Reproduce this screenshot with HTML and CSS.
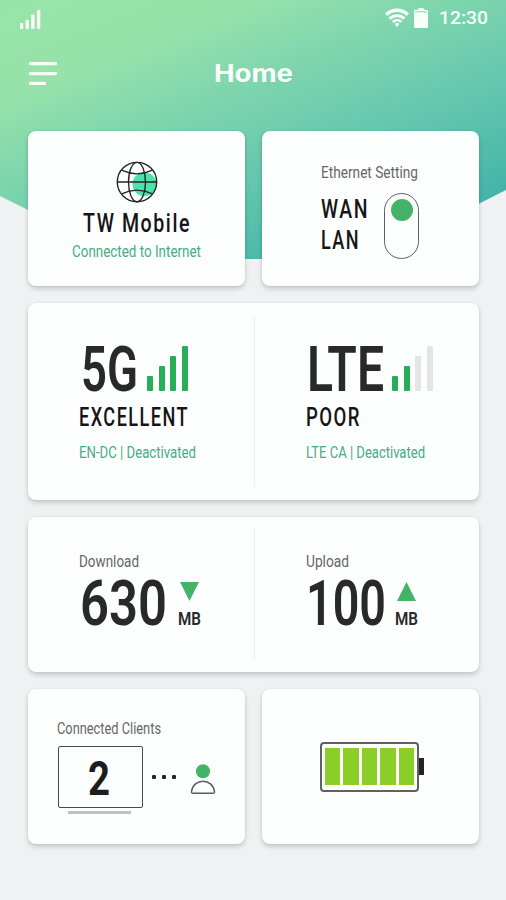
FILE: index.html
```html
<!DOCTYPE html>
<html lang="en">
<head>
<meta charset="utf-8">
<meta name="viewport" content="width=device-width, initial-scale=1">
<title>Home</title>
<link rel="stylesheet" href="styles.css">
</head>
<body>
<div class="screen">
  <header class="header">
    <div class="status">
      <svg class="signal" width="21" height="19" viewBox="0 0 21 19" fill="currentColor"><rect x="0" y="13" width="3.3" height="6" rx="1"/><rect x="5.6" y="9.8" width="3.3" height="9.2" rx="1"/><rect x="11.2" y="4.6" width="3.3" height="14.4" rx="1"/><rect x="17" y="0" width="3.3" height="19" rx="1"/></svg>
      <svg class="wifi" width="24" height="20" viewBox="0 0 24 20" fill="none" stroke="currentColor"><path d="M1.2 6.8C7.2 .8 16.8 .8 22.8 6.8" stroke-width="3.5"/><path d="M4.6 10.6C8.8 6.6 15.2 6.6 19.4 10.6" stroke-width="2.9"/><path d="M7.7 14C10.2 11.6 13.8 11.6 16.3 14" stroke-width="2.5"/><path d="M9.6 15.8Q12 14 14.4 15.8L12 19.2Z" fill="currentColor" stroke="none"/></svg>
      <svg class="cell" width="14" height="20" viewBox="0 0 14 20" fill="currentColor"><path d="M4 1.8Q4 0 5.5 0h3Q10 0 10 1.8h2.2Q14 1.8 14 3.4v15Q14 20 12.4 20H1.6Q0 20 0 18.4v-15Q0 1.8 1.8 1.8Z"/><path d="M1 4.2Q7 2.9 13 4.2" fill="none" stroke="#8bd8b1"/></svg>
      <svg class="text time" width="49" height="14"><text y="14" textLength="49" lengthAdjust="spacingAndGlyphs">12:30</text></svg>
    </div>
    <div class="bar">
      <svg class="menu" width="28" height="24" viewBox="0 0 28 24" fill="currentColor"><rect width="28" height="3.2" rx="1.2"/><rect y="10" width="28" height="3.2" rx="1.2"/><rect y="19.8" width="17" height="3.2" rx="1.2"/></svg>
      <svg class="text heading" width="79" height="18"><text y="18" textLength="79" lengthAdjust="spacingAndGlyphs">Home</text></svg>
    </div>
  </header>
  <main class="cards">
    <section class="card provider">
      <svg class="globe" width="42" height="42" viewBox="0 0 42 42"><circle cx="28.5" cy="23.2" r="12" fill="#48e4ae"/><g fill="none" stroke="#242424" stroke-width="1.35"><circle cx="21" cy="21" r="19.7"/><ellipse cx="21" cy="21" rx="8.5" ry="19.7"/><path d="M1.3 21h39.4M5.6 9.2Q21 16.5 36.4 9.2M5.6 32.8Q21 25.5 36.4 32.8"/></g></svg>
      <svg class="text title" width="108" height="18"><text y="18" textLength="108" lengthAdjust="spacingAndGlyphs">TW Mobile</text></svg>
      <svg class="text note" width="129" height="12"><text y="12" textLength="129" lengthAdjust="spacingAndGlyphs">Connected to Internet</text></svg>
    </section>
    <section class="card ethernet">
      <svg class="text label" width="97" height="12"><text y="12" textLength="97" lengthAdjust="spacingAndGlyphs">Ethernet Setting</text></svg>
      <div class="ports">
        <div class="names">
          <svg class="text title" width="48" height="18"><text y="18" textLength="48" lengthAdjust="spacingAndGlyphs">WAN</text></svg>
          <svg class="text title" width="39" height="18"><text y="18" textLength="39" lengthAdjust="spacingAndGlyphs">LAN</text></svg>
        </div>
        <div class="toggle"><span class="knob"></span></div>
      </div>
    </section>
    <section class="card wide network">
      <div class="half">
        <div class="row">
          <svg class="text big" width="57" height="45"><text y="45" textLength="57" lengthAdjust="spacingAndGlyphs">5G</text></svg>
          <div class="bars"><i class="b1"></i><i class="b2"></i><i class="b3"></i><i class="b4"></i></div>
        </div>
        <svg class="text title" width="110" height="18"><text y="18" textLength="110" lengthAdjust="spacingAndGlyphs">EXCELLENT</text></svg>
        <svg class="text note" width="117" height="12"><text y="12" textLength="117" lengthAdjust="spacingAndGlyphs">EN-DC | Deactivated</text></svg>
      </div>
      <div class="half">
        <div class="row">
          <svg class="text big" width="77" height="45"><text y="45" textLength="77" lengthAdjust="spacingAndGlyphs">LTE</text></svg>
          <div class="bars"><i class="b1"></i><i class="b2"></i><i class="b3 off"></i><i class="b4 off"></i></div>
        </div>
        <svg class="text title" width="55" height="18"><text y="18" textLength="55" lengthAdjust="spacingAndGlyphs">POOR</text></svg>
        <svg class="text note" width="119" height="12"><text y="12" textLength="119" lengthAdjust="spacingAndGlyphs">LTE CA | Deactivated</text></svg>
      </div>
    </section>
    <section class="card wide traffic">
      <div class="half">
        <svg class="text label" width="60" height="12"><text y="12" textLength="60" lengthAdjust="spacingAndGlyphs">Download</text></svg>
        <div class="row">
          <svg class="text big" width="87" height="45"><text y="45" textLength="87" lengthAdjust="spacingAndGlyphs">630</text></svg>
          <div class="unit">
            <svg class="arrow" width="19" height="19"><path d="M0 0h19L9.5 19Z"/></svg>
            <svg class="text mb" width="23" height="13"><text y="13" textLength="23" lengthAdjust="spacingAndGlyphs">MB</text></svg>
          </div>
        </div>
      </div>
      <div class="half">
        <svg class="text label" width="43" height="12"><text y="12" textLength="43" lengthAdjust="spacingAndGlyphs">Upload</text></svg>
        <div class="row">
          <svg class="text big" width="80" height="45"><text y="45" textLength="80" lengthAdjust="spacingAndGlyphs">100</text></svg>
          <div class="unit">
            <svg class="arrow" width="19" height="19"><path d="M0 19h19L9.5 0Z"/></svg>
            <svg class="text mb" width="23" height="13"><text y="13" textLength="23" lengthAdjust="spacingAndGlyphs">MB</text></svg>
          </div>
        </div>
      </div>
    </section>
    <section class="card clients">
      <svg class="text label" width="104" height="12"><text y="12" textLength="104" lengthAdjust="spacingAndGlyphs">Connected Clients</text></svg>
      <div class="devices">
        <div class="monitor">
          <div class="panel"><svg class="text count" width="22" height="35"><text y="35" textLength="22" lengthAdjust="spacingAndGlyphs">2</text></svg></div>
          <div class="stand"></div>
        </div>
        <div class="dots"><i></i><i></i><i></i></div>
        <svg class="person" width="26" height="31" viewBox="0 0 26 31"><circle cx="13" cy="7.2" r="7" fill="#43b467"/><path d="M3 29.3h20q1.7 0 1.5-1.7C23.5 21 18.5 17.2 13 17.2S2.5 21 1.5 27.600Q1.3 29.3 3 29.3Z" fill="none" stroke="#5c5c5c" stroke-width="1.5"/></svg>
      </div>
    </section>
    <section class="card power">
      <div class="battery"><i></i><i></i><i></i><i></i><i></i></div>
      <div class="tip"></div>
    </section>
  </main>
</div>
</body>
</html>
```

FILE: styles.css
```css
* { box-sizing: border-box; }
body { margin: 0; background: #f0f1f3; font-family: Roboto, sans-serif; }
.screen { width: 506px; height: 900px; overflow: hidden; background: #f0f1f3; }
svg { display: block; flex: none; }

.header {
  height: 259px;
  color: #f9fff9;
  background: linear-gradient(158deg, #98e4a8 0%, #96e2aa 22%, #7ad3ae 43%, #64c6ae 62%, #4cb9aa 79%, #3dafaa 92%);
  clip-path: polygon(0 0, 100% 0, 100% 190px, 370px 259px, 126px 259px, 0 196px);
}
.status { display: flex; height: 36px; padding: 8px 18px 0 20px; align-items: flex-start; }
.signal { margin: 2px auto 0 0; }
.wifi { margin-right: 5px; }
.cell { margin-right: 11px; }
.time { margin: 2px 0 0; }
.bar { display: flex; padding: 25.500px 0 0 28.500px; align-items: flex-start; }
.heading { margin: 2.500px 0 0 157px; }

/* Each text box is as tall as its capitals, with the baseline on its lower edge. */
.text { overflow: visible; fill: currentColor; }
.time { font-size: 19px; font-weight: 500; }
.heading { font: 700 24.500px Inter, sans-serif; }
.title { font-size: 25px; font-weight: 500; letter-spacing: 2px; color: #151515; }
.note { font-size: 16px; font-weight: 400; color: #45ad84; }
.label { font-size: 16px; font-weight: 400; color: #666; }
.big { font-size: 63px; font-weight: 600; color: #292929; }
.mb { font-size: 18.500px; font-weight: 600; color: #292929; }
.count { font-size: 49px; font-weight: 700; color: #1d1d1d; }

.cards {
  display: grid;
  grid-template: 155px 197px 154.500px 155px / 217px 217px;
  gap: 17px;
  margin: -128px 27px 0 28px;
}
.card {
  position: relative;
  border-radius: 8px;
  background: #fdfefe;
  box-shadow: 0 3px 5px rgba(0, 0, 0, .16), 0 0 3px rgba(0, 0, 0, .07);
}
.wide { grid-column: span 2; display: grid; grid-template-columns: 226px 1fr; }

.provider { display: flex; flex-direction: column; align-items: center; padding-top: 30px; }
.provider .title { margin-top: 11px; }
.provider .note { margin-top: 13px; }

.ethernet { padding: 35px 0 0 59px; }
.ports { display: flex; margin-top: 15px; gap: 15px; }
.names { display: grid; gap: 13px; align-content: start; padding-top: 7px; }
.toggle { width: 35px; height: 66px; border: 1.500px solid #606060; border-radius: 18px; padding-top: 5px; }
.knob { display: block; width: 22px; height: 22px; margin: 0 auto; border-radius: 50%; background: #43b467; }

.row { display: flex; align-items: flex-end; }
.half + .half { border-left: 1px solid #ededef; }
.network { padding: 14px 0; }
.network .half { padding: 29px 0 0 51px; }
.network .title { margin-top: 17px; }
.network .note { margin-top: 20px; }
.network .half:first-child .row { margin-left: 2px; gap: 9px; }
.network .half + .half .row { margin-left: 1px; gap: 8px; }
.bars { display: flex; align-items: flex-end; gap: 5.500px; }
.bars i { width: 6px; border-radius: 1px; background: #27ae57; }
.bars .off { background: #e5e5e5; }
.b1 { height: 15px; }
.b2 { height: 25px; }
.b3 { height: 35px; }
.b4 { height: 45px; }

.traffic { padding: 12px 0; }
.traffic .half { padding: 26px 0 0 51px; }
.traffic .row { margin-top: 13px; gap: 11px; }
.traffic .big { margin-left: 1px; }
.traffic .half + .half .row { gap: 9px; margin-left: -1px; }
.unit { display: grid; gap: 11px; justify-items: center; }
.arrow { fill: #43b467; }

.clients { padding: 33px 0 0 29px; }
.devices { display: flex; margin: 12px 0 0 1px; }
.monitor { width: 85px; }
.panel { display: flex; width: 85px; height: 62px; border: 1.500px solid #4b4b4b; border-radius: 2px; justify-content: center; padding: 13px 3px 0 0; }
.stand { width: 63px; height: 3px; margin: 3px 0 0 10px; background: #c0c0c0; }
.dots { display: flex; gap: 6px; margin: 29px 0 0 9px; }
.dots i { width: 4px; height: 4px; border-radius: 1px; background: #242424; }
.person { margin: 18px 0 0 14px; }

.power { display: flex; align-items: flex-start; padding: 53px 0 0 58px; }
.battery { display: flex; gap: 3px; width: 99px; height: 50px; padding: 4.500px 3px; border: 2px solid #606060; border-radius: 4px; }
.battery i { flex: 1; background: #8bce27; }
.tip { width: 5px; height: 17px; margin-top: 16px; background: #242424; }
```
